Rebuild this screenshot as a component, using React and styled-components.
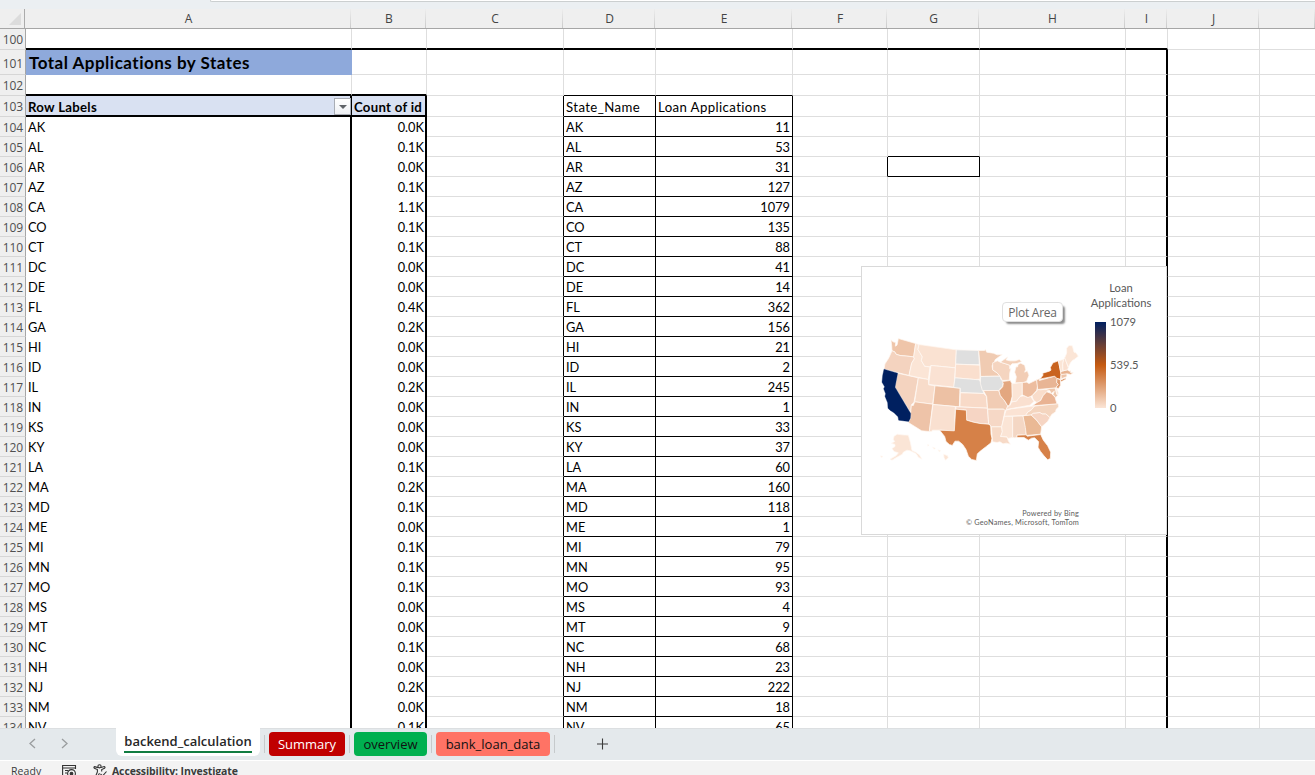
import React from "react";
import styled, { createGlobalStyle, css } from "styled-components";

const GlobalStyle = createGlobalStyle`
  html, body { margin: 0; padding: 0; overflow: hidden; }
  *, *::before, *::after { box-sizing: border-box; }
`;

const GRID = "#dedede";
const INK = "#000";

const Window = styled.div`
  position: relative;
  display: flex;
  flex-direction: column;
  width: 1315px;
  height: 775px;
  overflow: hidden;
  background: #fff;
  color: #000;
  font-family: Lato, "Liberation Sans", sans-serif;
`;

const FormulaStrip = styled.div`
  display: flex;
  justify-content: flex-end;
  flex: none;
  height: 9px;
  background: #ebeff2;
`;

const FormulaBox = styled.div`
  width: 1105px;
  height: 2px;
  background: #fff;
  border-bottom: 1px solid #cbcfd0;
  border-left: 1px solid #cbcfd0;
  border-bottom-left-radius: 3px;
`;

const HeaderRow = styled.div`
  display: flex;
  flex: none;
  height: 20px;
  background: #efefef;
  border-bottom: 1px solid #a6a6a6;
`;

const Corner = styled.div`
  display: flex;
  align-items: flex-end;
  justify-content: flex-end;
  width: 26px;
  padding: 0 3px 3px 0;
  border-right: 1px solid #ababab;

  &::after {
    content: "";
    border-left: 12px solid transparent;
    border-bottom: 12px solid #dcdcdc;
  }
`;

const ColumnHeader = styled.div`
  flex: none;
  width: ${(p) => p.$w}px;
  padding-left: 2px;
  border-right: 1px solid;
  border-image: linear-gradient(#efefef, #c8c8c8) 1;
  font: 12px/19px "Open Sans", sans-serif;
  color: #444;
  text-align: center;
`;

const Sheet = styled.div`
  flex: none;
  height: 699px;
  overflow: hidden;
`;

const Row = styled.div`
  display: flex;
  height: ${(p) => p.$h}px;
`;

const RowHeader = styled.div`
  flex: none;
  width: 26px;
  padding-right: 2px;
  background: #efefef;
  border-right: 1px solid #a6a6a6;
  border-bottom: 1px solid #d6d6d6;
  font: 12px/${(p) => (p.$h > 21 ? p.$h + 3 : p.$h + 1)}px "Open Sans", sans-serif;
  letter-spacing: -0.15px;
  color: #505050;
  text-align: right;
`;

const Cell = styled.div`
  position: relative;
  flex: none;
  width: ${(p) => p.$w}px;
  padding: 0 2px;
  background: ${(p) => p.$bg || "#fff"};
  border-style: solid;
  border-width: 0 ${(p) => p.$r[0]}px ${(p) => p.$b[0]}px 0;
  border-color: ${(p) => `${p.$r[1]} ${p.$r[1]} ${p.$b[1]}`};
  font-size: 12.8px;
  line-height: ${(p) => p.$h + 1}px;
  white-space: nowrap;
  text-align: ${(p) => (p.$num ? "right" : "left")};
  ${(p) =>
    p.$num &&
    p.$r[0] === 2 &&
    css`
      padding-right: 1px;
    `}
  ${(p) =>
    p.$heading &&
    css`
      font-size: 13.2px;
      letter-spacing: 0.4px;
    `}
  ${(p) =>
    p.$bold &&
    css`
      font-size: 13.2px;
      font-weight: 700;
      letter-spacing: 0.28px;
    `}
  ${(p) =>
    p.$title &&
    css`
      padding-left: 3px;
      font-size: 17px;
      font-weight: 700;
      letter-spacing: 0.5px;
    `}
`;

const FilterButton = styled.div`
  position: absolute;
  top: 2px;
  right: -1px;
  display: flex;
  align-items: center;
  justify-content: center;
  width: 17px;
  height: 17px;
  background: linear-gradient(#fff, #eef0f4);
  border: 1px solid #a9adb5;

  &::after {
    content: "";
    margin-top: 1px;
    border: 4px solid transparent;
    border-top-color: #5f6368;
    border-bottom: 0;
  }
`;

const Chart = styled.div`
  position: absolute;
  left: 861px;
  top: 266px;
  width: 306px;
  height: 269px;
  background: #fff;
  border: 1px solid #d9d9d9;
`;

const MapDrawing = styled.svg`
  position: absolute;
  left: 0;
  top: 0;
`;

const Legend = styled.div`
  position: absolute;
  left: 219px;
  top: 13px;
  width: 80px;
  color: #595959;
  font-size: 11.2px;
  line-height: 15px;
  text-align: center;
`;

const Scale = styled.div`
  display: flex;
  margin: 4px 0 0 14px;
`;

const ScaleBar = styled.div`
  width: 11px;
  height: 86px;
  margin-top: 8px;
  background: linear-gradient(#002060, #c55a11 50%, #fbe5d6);
`;

const ScaleLabels = styled.div`
  display: flex;
  flex-direction: column;
  justify-content: space-between;
  height: 101px;
  margin: 0 0 0 4px;
  text-align: left;
`;

const ChartCredit = styled.div`
  position: absolute;
  right: 87px;
  top: 242px;
  color: #5c5c5c;
  font-size: 7.3px;
  line-height: 9px;
  letter-spacing: 0.2px;
  text-align: right;
  white-space: nowrap;
`;

const Tooltip = styled.div`
  position: absolute;
  left: 140px;
  top: 35px;
  width: 61px;
  height: 20px;
  background: #fff;
  border: 1px solid #e0e0e0;
  border-radius: 4px;
  box-shadow: 3px 3px 2px -1px rgba(0, 0, 0, 0.45);
  color: #666;
  font: 12px/19px "Open Sans", sans-serif;
  letter-spacing: -0.25px;
  text-align: center;
  white-space: nowrap;
`;

const TabBar = styled.div`
  display: flex;
  flex: none;
  height: 32px;
  background: #e4e9ec;
  border-top: 1px solid #dcdfe1;
  font-family: "Open Sans", "Noto Sans", sans-serif;
`;

const TabNav = styled.div`
  display: flex;
  gap: 23px;
  width: 116px;
  padding: 9px 0 0 27px;
`;

const Tab = styled.div`
  flex: none;
  width: ${(p) => p.$w}px;
  height: 24px;
  margin: 3px 4px 0;
  border-radius: 4px;
  background: ${(p) => p.$bg};
  color: ${(p) => p.$fg};
  font-size: 13px;
  line-height: 25px;
  text-align: center;
`;

const ActiveTab = styled.div`
  width: 144px;
  height: 28px;
  margin-top: -1px;
  margin-right: 4px;
  padding: 0 8px;
  background: #fff;
  border-radius: 0 0 6px 6px;
  font-size: 13px;
  font-weight: 600;
  line-height: 26px;
  color: #262626;
  text-align: center;
`;

const ActiveLabel = styled.div`
  width: 128px;
  height: 25px;
  border-bottom: 2px solid #107c41;
  white-space: nowrap;
`;

const Separator = styled.div`
  width: 1px;
  height: 18px;
  margin-top: 6px;
  background: #c6cacc;
`;

const AddTab = styled.div`
  display: flex;
  align-items: flex-start;
  padding: 9px 0 0 41px;
`;

const StatusBar = styled.div`
  display: flex;
  flex: none;
  height: 15px;
  overflow: hidden;
  border-top: 1px solid #fff;
  background: #f3f3f3;
  color: #3b3b3b;
  font: 10.5px/21px "Open Sans", "Noto Sans", sans-serif;
  white-space: nowrap;
`;

const StatusIcon = styled.div`
  display: flex;
  flex: none;
  align-items: flex-start;
  width: 15px;
  padding-top: 3px;
  margin-right: ${(p) => p.$mr}px;
`;

const StatusText = styled.span`
  ${(p) => p.$w && `width: ${p.$w}px;`}
  margin-left: ${(p) => p.$ml || 0}px;
  font-weight: ${(p) => (p.$bold ? 700 : 400)};
  letter-spacing: ${(p) => (p.$bold ? "-0.12px" : "0.1px")};
`;

const COLUMNS = [
  ["A", 326], ["B", 75], ["C", 137], ["D", 92], ["E", 137], ["F", 95],
  ["G", 92], ["H", 146], ["I", 42], ["J", 92], ["", 56],
];

const STATES = [
  ["AK", "0.0K", 11], ["AL", "0.1K", 53], ["AR", "0.0K", 31], ["AZ", "0.1K", 127],
  ["CA", "1.1K", 1079], ["CO", "0.1K", 135], ["CT", "0.1K", 88], ["DC", "0.0K", 41],
  ["DE", "0.0K", 14], ["FL", "0.4K", 362], ["GA", "0.2K", 156], ["HI", "0.0K", 21],
  ["ID", "0.0K", 2], ["IL", "0.2K", 245], ["IN", "0.0K", 1], ["KS", "0.0K", 33],
  ["KY", "0.0K", 37], ["LA", "0.1K", 60], ["MA", "0.2K", 160], ["MD", "0.1K", 118],
  ["ME", "0.0K", 1], ["MI", "0.1K", 79], ["MN", "0.1K", 95], ["MO", "0.1K", 93],
  ["MS", "0.0K", 4], ["MT", "0.0K", 9], ["NC", "0.1K", 68], ["NH", "0.0K", 23],
  ["NJ", "0.2K", 222], ["NM", "0.0K", 18], ["NV", "0.1K", 65],
];

const ROWS = [
  { n: 100, h: 21, cells: {} },
  { n: 101, h: 25, cells: { A: "Total Applications by States" } },
  { n: 102, h: 21, cells: {} },
  { n: 103, h: 21, cells: { A: "Row Labels", B: "Count of id", D: "State_Name", E: "Loan Applications" } },
  ...STATES.map(([s, k, v], i) => ({ n: 104 + i, h: 20, cells: { A: s, B: k, D: s, E: v } })),
];

function rightEdge(col, n) {
  if (col === "I" && n > 100) return [2, INK];
  if (col === "A" && n === 101) return [0, GRID];
  if ((col === "A" || col === "B") && n >= 103) return [2, INK];
  if ("CDE".includes(col) && col && n >= 103) return [1, INK];
  if ((col === "F" || col === "G") && n === 106) return [1, INK];
  return [1, GRID];
}

function bottomEdge(col, n) {
  if (n === 100 && col && col !== "J") return [2, INK];
  if (col === "A" || col === "B") {
    if (n === 102 || n === 103) return [2, INK];
    if (n > 103 || (col === "A" && n === 101)) return [0, GRID];
  }
  if ((col === "D" || col === "E") && n >= 102) return [1, INK];
  if (col === "G" && (n === 105 || n === 106)) return [1, INK];
  return [1, GRID];
}

function fill(col, n) {
  if (col === "A" && n === 101) return "#8ea9db";
  if ((col === "A" || col === "B") && n === 103) return "#d9e1f2";
  return undefined;
}

function SheetRow({ n, h, cells }) {
  return (
    <Row $h={h}>
      <RowHeader $h={h}>{n}</RowHeader>
      {COLUMNS.map(([col, w]) => (
        <Cell
          key={col || "K"}
          $w={w}
          $h={h}
          $r={rightEdge(col, n)}
          $b={bottomEdge(col, n)}
          $bg={fill(col, n)}
          $num={(col === "B" || col === "E") && n > 103}
          $heading={n === 103 && (col === "D" || col === "E")}
          $bold={n === 103 && (col === "A" || col === "B")}
          $title={n === 101}
        >
          {cells[col]}
          {col === "A" && n === 103 && <FilterButton />}
        </Cell>
      ))}
    </Row>
  );
}

const WEST = [
  ["#efc5a9", "93,43 99,49 107,51 106,62 111,59 113,50 115,39 167,54 161,94 132,91 120,90 108,86 104,79 96,76 95,60"],
  ["#f4d3bf", "96,76 104,79 108,86 120,90 132,91 161,94 163,100 155,113 147,150 72,131 75,115 86,98"],
  ["#f4d3bf", "113,143 175,157 162,230 154,238 152,262 105,185"],
  ["#fbe5d6", "167,54 177,57 174,72 187,94 184,105 194,122 210,124 205,162 147,150 155,113 163,100 161,94"],
  ["#fae2d2", "177,57 289,73 286,127 213,120 210,124 194,122 184,105 187,94 174,72"],
  ["#fae2d3", "213,120 286,127 282,185 206,177"],
  ["#f8dcca", "175,157 205,162 206,178 225,181 218,236 164,229"],
  ["#edc1a4", "225,181 300,188 298,244 219,237"],
  ["#eec3a8", "164,229 218,236 208,318 185,316 145,291 152,278 152,262 154,240 160,240"],
  ["#f9e0d0", "219,237 286,243 283,316 239,314 217,314 216,318 208,318"],
  ["#dfdfdf", "289,73 356,75 358,118 287,116"],
  ["#fadfce", "287,116 360,119 360,161 345,162 285,157"],
  ["#dfdfdf", "285,157 345,162 358,163 364,175 371,204 301,201 301,188 281,186"],
  ["#f8dac8", "301,202 371,204 379,212 382,248 300,244"],
  ["#f6d5c4", "288,244 382,248 386,296 360,294 340,290 320,284 319,254 287,251"],
  ["#d68148", "287,251 319,254 320,284 340,290 360,294 386,296 392,300 393,326 396,338 393,352 380,362 362,376 352,385 349,405 335,402 325,392 318,372 308,357 296,347 285,347 277,360 268,357 258,348 254,333 239,314 283,316"],
  ["#fbe5d6", "100,342 102,332 112,326 125,328 145,329 151,350 156,375 167,380 178,388 186,401 176,396 168,384 151,376 141,374 130,380 127,386 108,397 96,404 90,401 108,391 115,382 102,378 96,369 105,363 105,357 94,353 104,348"],
  ["#fbe5d6", "203,357 207,359 204,362"],
  ["#fbe5d6", "218,365 226,368 223,371"],
  ["#fbe5d6", "234,373 242,376 238,379"],
  ["#fbe5d6", "251,386 263,391 265,397 256,404 252,396"],
  ["#fbe5d6", "62,391 69,393 64,396"],
];

const EAST = [
  ["#f0cbb2", "26,75 44,75 46,71 50,80 70,83 82,88 97,87 84,96 75,103 73,113 66,120 68,133 81,142 90,152 32,153 30,118"],
  ["#dfdfdf", "32,153 90,152 93,162 100,168 98,182 90,190 87,196 37,195 31,173"],
  ["#f1ccb4", "40,195 86,195 91,210 98,219 104,226 113,241 110,254 103,254 101,251 53,251 50,213"],
  ["#f6d8c6", "53,251 101,251 105,255 100,280 95,304 64,304 60,298 56,296"],
  ["#f7dac7", "64,304 95,304 97,319 92,333 111,334 115,346 121,356 109,353 99,355 90,349 81,351 68,349 66,329"],
  ["#fbe5d6", "103,272 128,272 128,336 113,339 111,334 92,333 97,319 95,304"],
  ["#f4d7c4", "128,272 159,271 169,306 168,328 141,329 142,336 134,337 128,336"],
  ["#eab995", "159,271 183,268 199,283 215,304 212,326 169,330 166,306"],
  ["#d68148", "141,329 168,328 172,332 212,327 220,344 233,361 242,380 241,399 233,403 222,391 211,377 204,365 206,349 194,337 185,338 175,344 162,336 141,336"],
  ["#f6d5c3", "183,268 190,263 210,261 216,265 227,265 240,276 233,288 215,304 199,283"],
  ["#f4d5bf", "166,270 173,260 185,252 192,242 264,234 266,244 258,252 257,259 245,267 240,276 227,265 216,265 210,261 190,263 183,268"],
  ["#fbe3d4", "108,254 125,250 194,241 185,252 173,260 166,270 103,272"],
  ["#fae0d0", "113,243 120,240 125,229 139,227 150,213 162,211 174,216 181,211 188,222 192,228 180,239 108,252"],
  ["#f5d5c0", "68,112 82,106 91,110 107,115 119,119 119,130 123,128 119,143 118,164 97,165 90,152 81,142 68,133"],
  ["#f3d0b9", "91,110 106,99 114,94 108,103 119,106 135,106 148,102 155,108 141,114 126,115 120,122 119,119 107,115"],
  ["#f2cdb5", "152,113 164,119 167,132 164,140 172,136 177,149 170,167 159,172 136,172 139,154 134,140 138,124 143,124 144,117"],
  ["#e3a780", "97,168 121,165 126,175 127,212 123,226 118,240 113,241 104,226 98,219 91,210 87,196 98,184 100,174"],
  ["#fbe5d6", "126,175 157,171 157,207 150,213 139,227 125,229 127,212"],
  ["#edbd9f", "157,171 170,170 177,174 200,163 203,181 200,195 186,211 174,216 157,208"],
  ["#f9ddcb", "203,192 212,193 226,191 239,195 230,199 219,211 212,225 201,231 192,226 188,218 186,211 200,197"],
  ["#e9b393", "187,241 201,231 212,225 219,211 230,199 244,204 255,215 259,229 261,235"],
  ["#eec7ac", "226,191 255,187 260,206 265,208 257,216 249,207 253,197 244,204 239,195"],
  ["#fae2d3", "258,187 261,190 266,205 260,206"],
  ["#e8b595", "200,163 208,160 208,165 254,152 262,159 260,171 265,177 258,187 203,192"],
  ["#c9631f", "212,158 219,149 218,143 238,137 243,134 241,126 249,112 265,106 268,118 270,130 273,147 271,161 261,159 254,152 208,161"],
  ["#c9631f", "272,164 288,157 287,161 274,168"],
  ["#df9d73", "261,159 271,163 272,179 265,190 258,185 265,177 260,171"],
  ["#edc4a8", "273,147 290,144 291,153 274,160"],
  ["#e8b390", "272,138 292,133 298,137 302,136 302,142 310,142 302,147 291,145 273,147"],
  ["#fbe5d6", "265,106 281,102 278,116 279,136 272,138 270,130"],
  ["#fae0d0", "281,102 284,97 295,125 293,133 279,136 278,116"],
  ["#fbe5d6", "284,97 290,83 290,68 297,60 307,61 312,80 318,82 325,92 314,101 307,105 302,111 295,125"],
];

function StateMap() {
  return (
    <MapDrawing width="236" height="230" viewBox="0 0 236 230">
      <g transform="translate(-2 58.5) scale(0.33333)" stroke="#fff8f3" strokeWidth="2.2" strokeLinejoin="round">
        {WEST.map(([c, pts]) => <polygon key={pts} points={pts} fill={c} />)}
        <polygon
          points="72,131 113,143 105,185 152,264 151,278 146,288 116,284 114,274 102,262 90,254 84,248 83,232 75,212 77,205 71,190 74,184 66,170 68,150"
          fill="#002060"
          stroke="#002060"
          strokeWidth="1"
        />
        <g transform="translate(330 0)">
          {EAST.map(([c, pts]) => <polygon key={pts} points={pts} fill={c} />)}
        </g>
      </g>
    </MapDrawing>
  );
}

function MapChart() {
  return (
    <Chart>
      <StateMap />
      <Legend>
        Loan<br />Applications
        <Scale>
          <ScaleBar />
          <ScaleLabels>
            <span>1079</span>
            <span>539.5</span>
            <span>0</span>
          </ScaleLabels>
        </Scale>
      </Legend>
      <ChartCredit>Powered by Bing<br />© GeoNames, Microsoft, TomTom</ChartCredit>
      <Tooltip>Plot Area</Tooltip>
    </Chart>
  );
}

function Chevron({ d }) {
  return (
    <svg width="10" height="11" viewBox="0 0 10 11" fill="none" stroke="#9a9d9f" strokeWidth="1.3">
      <path d={d} />
    </svg>
  );
}

function MacroIcon() {
  return (
    <svg width="15" height="15" viewBox="0 0 15 15" fill="none" stroke="#333" strokeWidth="1.1">
      <path d="M5 12.5H.6V1.5H13.5V5M.6 4H13.5M3 6.5H6M3 9H5" />
      <circle cx="9.5" cy="9.5" r="3.9" />
      <circle cx="9.5" cy="9.5" r="1.3" fill="#333" />
    </svg>
  );
}

function AccessibilityIcon() {
  return (
    <svg width="15" height="15" viewBox="0 0 15 15" fill="none" stroke="#333" strokeWidth="1.1">
      <circle cx="6.5" cy="2.3" r="1.6" />
      <path d="M5 3.6L1.7 2.6Q.3 3.3 1.4 4.2L4.4 5.6V8L2.7 12Q3 14 4.3 12.8L6.5 9.3M8 3.6L11.2 2.6Q12.7 3.3 11.5 4.2L8.7 5.6V7.5" />
      <path d="M7.5 10L9.5 12L13.5 7.5" />
    </svg>
  );
}

export default function App() {
  return (
    <Window>
      <GlobalStyle />
      <FormulaStrip><FormulaBox /></FormulaStrip>
      <HeaderRow>
        <Corner />
        {COLUMNS.map(([name, w]) => <ColumnHeader key={name || "K"} $w={w}>{name}</ColumnHeader>)}
      </HeaderRow>
      <Sheet>
        {ROWS.map((row) => <SheetRow key={row.n} {...row} />)}
      </Sheet>
      <MapChart />
      <TabBar>
        <TabNav>
          <Chevron d="M8 1L3 5.5L8 10" />
          <Chevron d="M2 1L7 5.5L2 10" />
        </TabNav>
        <ActiveTab><ActiveLabel>backend_calculation</ActiveLabel></ActiveTab>
        <Separator />
        <Tab $w={76} $bg="#c00000" $fg="#fff">Summary</Tab>
        <Separator />
        <Tab $w={73} $bg="#00b050" $fg="#111">overview</Tab>
        <Separator />
        <Tab $w={114} $bg="#ff7365" $fg="#111">bank_loan_data</Tab>
        <Separator />
        <AddTab>
          <svg width="13" height="12" viewBox="0 0 13 12" stroke="#3b3b3b" strokeWidth="1.1">
            <path d="M6.5 .5V11.5M1 6H12" />
          </svg>
        </AddTab>
      </TabBar>
      <StatusBar>
        <StatusText $ml={11} $w={51}>Ready</StatusText>
        <StatusIcon $mr={16}><MacroIcon /></StatusIcon>
        <StatusIcon $mr={4}><AccessibilityIcon /></StatusIcon>
        <StatusText $bold>Accessibility: Investigate</StatusText>
      </StatusBar>
    </Window>
  );
}
